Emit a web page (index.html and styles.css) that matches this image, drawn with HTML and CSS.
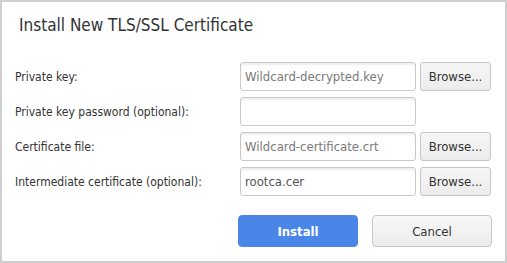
FILE: index.html
```html
<!DOCTYPE html>
<html>
<head>
    <title>Install New TLS/SSL Certificate</title>
    <link rel="stylesheet" href="styles.css">
</head>
<body>
    <div class="dialog">
        <h1>Install New TLS/SSL Certificate</h1>

        <div class="form">
            <label>Private key:</label>
            <div class="field">
                <input type="text" value="Wildcard-decrypted.key">
                <button class="browse">Browse...</button>
            </div>

            <label>Private key password (optional):</label>
            <div class="field">
                <input type="password" value="">
            </div>

            <label>Certificate file:</label>
            <div class="field">
                <input type="text" value="Wildcard-certificate.crt">
                <button class="browse">Browse...</button>
            </div>

            <label>Intermediate certificate (optional):</label>
            <div class="field">
                <input type="text" value="rootca.cer" class="dark">
                <button class="browse">Browse...</button>
            </div>
        </div>

        <div class="actions">
            <button class="primary">Install</button>
            <button class="secondary">Cancel</button>
        </div>
    </div>
</body>
</html>
```

FILE: styles.css
```css
body {
    margin: 0;
    background: white;
    font-family: "DejaVu Sans Condensed", "DejaVu Sans", sans-serif;
    font-size: 12px;
    color: #333;
}
.dialog {
    width: 503px;
    height: 259px;
    border: 2px solid #cfcfcf;
    box-sizing: content-box;
}
h1 {
    font-size: 17px;
    font-weight: normal;
    color: #333;
    margin: 0;
    padding: 13px 0 0 17px;
    height: 43px;
    box-sizing: border-box;
}
.form {
    display: grid;
    grid-template-columns: 225px auto;
    row-gap: 6px;
    padding-left: 13px;
    margin-top: 17px;
}
.form label {
    display: flex;
    align-items: center;
    height: 29px;
}
.field {
    display: flex;
    gap: 4px;
    height: 29px;
}
.field input {
    width: 176px;
    height: 29px;
    box-sizing: border-box;
    border: 1px solid #c9c9c9;
    border-radius: 3px;
    padding: 0 4px;
    font-family: inherit;
    font-size: 13px;
    color: #7a7a7a;
    background: white;
    box-shadow: inset 0 2px 2px #eee;
}
.field input.dark { color: #555; }
.browse {
    width: 71px;
    height: 29px;
    border: 1px solid #c6c6c6;
    border-radius: 3px;
    background: linear-gradient(#f6f6f6, #ececec);
    font-family: inherit;
    font-size: 13px;
    color: #333;
    padding: 0;
}
.actions {
    display: flex;
    gap: 14px;
    padding-left: 236px;
    margin-top: 19px;
}
.actions button {
    width: 120px;
    height: 32px;
    border-radius: 4px;
    font-family: inherit;
    font-size: 13px;
}
.primary {
    background: #4a86e8;
    border: 1px solid #4a86e8;
    color: white;
    font-weight: bold;
}
.secondary {
    background: linear-gradient(#f8f8f8, #ececec);
    border: 1px solid #c6c6c6;
    color: #333;
}
```
